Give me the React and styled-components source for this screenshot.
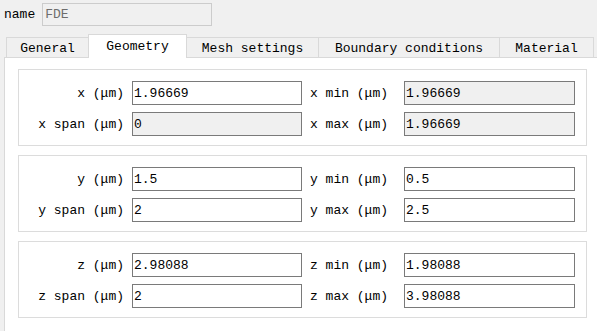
import React from "react";
import styled, { createGlobalStyle } from "styled-components";

const GlobalStyle = createGlobalStyle`
  html, body {
    margin: 0;
    padding: 0;
    background: #f0f0f0;
    overflow: hidden;
  }
  body {
    font-family: "Liberation Mono", "DejaVu Sans Mono", monospace;
    font-size: 13px;
    color: #000;
  }
`;

const tabs = [
  { label: "General", width: 83 },
  { label: "Geometry", width: 99, active: true },
  { label: "Mesh settings", width: 133 },
  { label: "Boundary conditions", width: 182 },
  { label: "Material", width: 95 },
];

const groups = [
  {
    axis: "x",
    rows: [
      ["x (μm)", "1.96669", false, "x min (μm)", "1.96669", true],
      ["x span (μm)", "0", true, "x max (μm)", "1.96669", true],
    ],
  },
  {
    axis: "y",
    rows: [
      ["y (μm)", "1.5", false, "y min (μm)", "0.5", false],
      ["y span (μm)", "2", false, "y max (μm)", "2.5", false],
    ],
  },
  {
    axis: "z",
    rows: [
      ["z (μm)", "2.98088", false, "z min (μm)", "1.98088", false],
      ["z span (μm)", "2", false, "z max (μm)", "3.98088", false],
    ],
  },
];

export default function App() {
  return (
    <Page>
      <GlobalStyle />
      <NameRow>
        <span>name</span>
        <NameInput value="FDE" readOnly />
      </NameRow>
      <TabBar>
        {tabs.map((t) => (
          <Tab key={t.label} $active={t.active} $width={t.width}>
            {t.label}
          </Tab>
        ))}
      </TabBar>
      <Panel>
        {groups.map((g) => (
          <Group key={g.axis}>
            {g.rows.map((r) => (
              <React.Fragment key={r[0]}>
                <Label $align="right">{r[0]}</Label>
                <Field value={r[1]} readOnly $disabled={r[2]} />
                <Label>{r[3]}</Label>
                <Field value={r[4]} readOnly $disabled={r[5]} />
              </React.Fragment>
            ))}
          </Group>
        ))}
      </Panel>
    </Page>
  );
}

const Page = styled.div`
  padding: 3px 0 0 4px;
  width: 610px;
`;

const NameRow = styled.div`
  display: flex;
  align-items: center;
  gap: 7px;
  height: 23px;
`;

const NameInput = styled.input`
  box-sizing: border-box;
  width: 170px;
  height: 23px;
  border: 1px solid #cccccc;
  background: #f0f0f0;
  color: #6d6d6d;
  font-family: inherit;
  font-size: 13px;
  padding: 0 2px;
  outline: none;
`;

const TabBar = styled.div`
  display: flex;
  align-items: flex-end;
  height: 24px;
  margin-top: 8px;
  padding-left: 2px;
  margin-bottom: -1px;
  position: relative;
  z-index: 1;
`;

const Tab = styled.div`
  box-sizing: border-box;
  width: ${(p) => p.$width}px;
  height: ${(p) => (p.$active ? 24 : 21)}px;
  margin-left: -1px;
  display: flex;
  align-items: center;
  justify-content: center;
  padding-top: ${(p) => (p.$active ? 0 : 1)}px;
  border: 1px solid #d9d9d9;
  border-bottom: ${(p) => (p.$active ? "none" : "1px solid #d9d9d9")};
  background: ${(p) => (p.$active ? "#ffffff" : "#f0f0f0")};
  white-space: nowrap;
  &:first-child {
    margin-left: 0;
  }
`;

const Panel = styled.div`
  box-sizing: border-box;
  width: 606px;
  height: 300px;
  background: #ffffff;
  border: 1px solid #d9d9d9;
  padding: 11px 0 0 13px;
  display: flex;
  flex-direction: column;
  gap: 9px;
`;

const Group = styled.div`
  box-sizing: border-box;
  width: 569px;
  height: 77px;
  border: 1px solid #dcdcdc;
  padding: 11px 11px 0 0;
  display: grid;
  grid-template-columns: 105px 170px 86px 171px;
  grid-auto-rows: 24px;
  column-gap: 8px;
  row-gap: 7px;
  align-items: center;
`;

const Label = styled.span`
  text-align: ${(p) => p.$align || "left"};
  white-space: nowrap;
`;

const Field = styled.input`
  box-sizing: border-box;
  width: 100%;
  height: 24px;
  border: 1px solid #7a7a7a;
  background: ${(p) => (p.$disabled ? "#f0f0f0" : "#ffffff")};
  color: #000;
  font-family: inherit;
  font-size: 13px;
  padding: 0 1px;
  outline: none;
`;
